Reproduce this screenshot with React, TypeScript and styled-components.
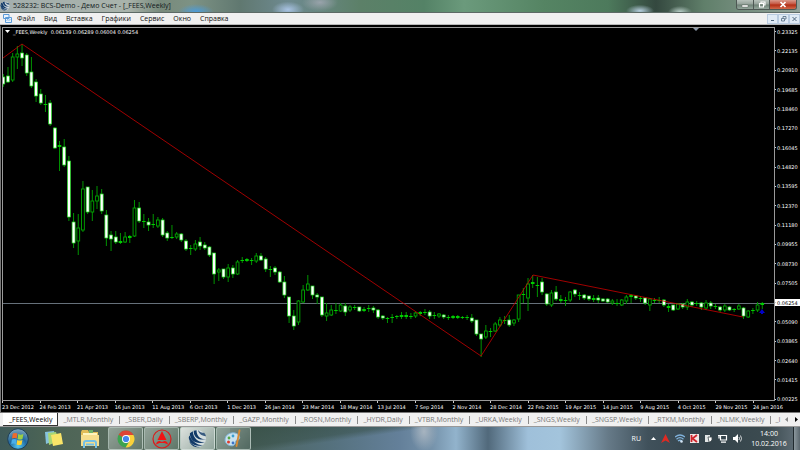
import React from "react";
import styled, { createGlobalStyle } from "styled-components";

const Global = createGlobalStyle`
  * { box-sizing: border-box; }
  html, body { margin: 0; height: 100%; background: #000; }
  body { font-family: "Open Sans", "Noto Sans", sans-serif; }
  #root { height: 100%; }
  button { font: inherit; border: 0; padding: 0; margin: 0; background: none; color: inherit; }
`;

type Kind = "up" | "down" | "doji";
type Candle = [high: number, top: number, bottom: number, low: number, kind: Kind];

const RAW = `74 77 84 86 d|67 76 82 82 d|53 57 80 81 u|46 54 57 68 u|44 53 58 65 d|53 55 73 75 d|57 72 86 87 d|79 82 96 101 d|89 94 103 104 d|95 104 105 111 x
100 103 124 125 d|127 128 148 148 d|141 145 147 170 x|139 147 165 166 d|156 161 217 220 d|213 222 243 247 d|214 228 241 254 u|181 189 230 231 u|187 187 212 213 d|190 201 212 220 u
186 196 201 208 u|189 194 211 213 d|210 215 238 245 d|231 235 239 250 d|231 237 242 243 d|233 241 243 243 x|232 237 242 242 u|235 236 238 242 x|200 208 236 236 u|202 208 221 222 d
214 221 222 227 x|218 222 225 230 d|214 224 225 227 x|217 220 226 227 u|218 220 235 236 d|231 233 238 240 d|225 237 238 238 x|232 234 237 238 u|233 234 240 241 d|239 241 249 250 d
245 248 249 254 x|240 244 249 250 u|237 242 246 249 d|242 245 248 249 d|246 247 255 256 d|253 253 274 283 d|268 270 272 280 u|269 269 277 278 d|264 268 277 281 u|265 268 274 277 d
260 262 274 274 u|257 260 261 262 x|258 259 261 261 x|258 260 261 264 x|253 256 261 262 u|253 256 260 260 d|257 259 269 271 d|266 269 270 276 x|266 268 272 274 d|271 272 282 282 d
276 282 295 297 d|297 297 316 322 d|310 316 326 329 d|300 301 322 324 u|285 290 302 302 u|275 284 290 290 u|286 286 295 298 d|293 295 297 303 d|297 297 315 316 d|303 313 316 320 u
305 310 315 315 u|303 310 311 313 x|303 305 311 311 u|303 306 312 315 d|305 307 310 311 u|305 307 308 309 x|307 307 311 311 d|307 309 311 311 x|305 308 309 311 x|306 308 310 312 d
309 310 317 318 d|315 316 318 319 d|317 318 319 322 x|314 317 318 322 x|315 316 317 318 x|312 315 317 318 x|312 315 317 318 x|313 316 317 318 x|312 313 316 317 u|311 312 314 315 x
309 312 313 314 x|310 312 316 318 d|312 315 316 318 x|313 314 316 317 u|314 315 317 318 d|315 317 318 319 x|315 316 318 318 x|315 316 318 318 x|316 317 318 318 x|315 317 318 319 x
314 318 321 322 d|320 320 334 335 d|334 334 339 356 d|325 331 337 338 u|328 331 332 336 x|322 324 331 331 u|317 320 325 326 u|316 320 321 323 x|315 320 325 326 d|319 320 323 325 u
295 295 319 321 u|288 294 295 302 x|278 284 298 310 u|275 282 284 287 x|277 285 286 296 x|278 282 292 294 d|293 294 304 305 d|290 293 305 306 u|286 292 299 300 d|295 299 301 302 x
297 300 301 305 x|291 292 300 301 u|289 290 294 296 d|292 295 296 299 x|294 295 298 299 d|296 296 299 300 d|295 298 300 301 x|295 298 300 302 d|298 299 301 301 d|298 299 302 302 d
299 301 303 304 u|299 303 304 305 x|299 300 305 305 u|295 297 301 303 u|294 295 297 302 x|295 296 298 299 d|296 298 299 301 x|298 298 303 304 d|298 299 305 310 u|298 300 301 302 x
297 300 301 302 x|299 300 305 306 d|304 306 308 311 x|305 305 310 310 d|303 304 309 309 u|303 304 307 308 d|299 302 307 309 u|301 302 305 306 d|301 303 304 305 x|302 303 307 309 d
300 303 308 309 u|301 303 306 308 d|304 306 307 308 x|306 307 310 311 d|304 306 310 311 u|306 307 310 310 d|308 309 310 311 x|304 306 309 309 u|307 308 316 318 d|310 311 317 317 u
308 310 311 313 x|302 305 310 311 u|302 303 305 308 x`;

const kinds: Record<string, Kind> = { u: "up", d: "down", x: "doji" };

const candles: Candle[] = RAW.split(/[|\n]/).map((row) => {
  const [h, t, b, l, k] = row.split(" ");
  return [+h, +t, +b, +l, kinds[k]];
});

const prices = [
  "0.23325", "0.22135", "0.20910", "0.19685", "0.18460", "0.17270", "0.16045", "0.14820", "0.13595", "0.12370",
  "0.11180", "0.09955", "0.08730", "0.07505", "0.06254", "0.05090", "0.03865", "0.02640", "0.01415", "0.00225",
];
const dates = [
  "23 Dec 2012", "24 Feb 2013", "21 Apr 2013", "16 Jun 2013", "11 Aug 2013", "6 Oct 2013", "1 Dec 2013",
  "26 Jan 2014", "23 Mar 2014", "18 May 2014", "13 Jul 2014", "7 Sep 2014", "2 Nov 2014", "28 Dec 2014",
  "22 Feb 2015", "19 Apr 2015", "14 Jun 2015", "9 Aug 2015", "4 Oct 2015", "29 Nov 2015", "24 Jan 2016",
];
const menus = ["Файл", "Вид", "Вставка", "Графики", "Сервис", "Окно", "Справка"];
const tabs = [
  "_FEES,Weekly", "_MTLR,Monthly", "_SBER,Daily", "_SBERP,Monthly", "_GAZP,Monthly", "_ROSN,Monthly", "_HYDR,Daily",
  "_VTBR,Monthly", "_URKA,Weekly", "_SNGS,Weekly", "_SNGSP,Weekly", "_RTKM,Monthly", "_NLMK,Weekly", "_I",
];

const Window = styled.div`
  display: flex;
  flex-direction: column;
  height: 100vh;
  min-height: 300px;
  overflow: hidden;
  background: #000;
`;

const TitleBar = styled.header`
  display: flex;
  align-items: center;
  flex: none;
  height: 13px;
  gap: 3px;
  padding-right: 3px;
  border-bottom: 1px solid #5d6a66;
  background:
    radial-gradient(ellipse 18px 8px at 24.5% 100%, #4a9cdc, transparent),
    radial-gradient(ellipse 16px 8px at 36% 80%, #a9c3e3, transparent),
    radial-gradient(ellipse 18px 9px at 40% 20%, #99a3ab, transparent),
    radial-gradient(ellipse 14px 6px at 80% 90%, #b6cede, transparent),
    radial-gradient(ellipse 12px 6px at 85% 100%, #b9cfc9, transparent),
    linear-gradient(90deg, #a3aead 0%, #a9b3ab 16%, #788a7c 20%, #7d9284 24%, #607870 30%, #6e8a90 36%, #5c8068 45%, #548266 53%, #6b9a7c 58%, #558463 68%, #4d7a5c 76%, #34483f 82%, #607f6a 88%, #93a39b 100%);
`;

const Title = styled.h1`
  flex: 1;
  margin: 0;
  font-size: 7px;
  line-height: 12px;
  font-weight: 400;
  color: #10181a;
  white-space: nowrap;
`;

const CaptionButtons = styled.div`
  display: flex;
  align-self: flex-start;
  height: 10px;
  border: 1px solid #4e5854;
  border-top: 0;
  border-radius: 0 0 3px 3px;
  overflow: hidden;
`;

const CaptionButton = styled.button<{ $close?: boolean }>`
  display: grid;
  place-items: center;
  width: ${(p) => (p.$close ? 27 : 16)}px;
  background: ${(p) =>
    p.$close ? "linear-gradient(#d99a8c, #c4513c 48%, #b02a12 52%, #d0684a)" : "linear-gradient(#b8c2bc, #93a199 48%, #6d8075 52%, #94a69c)"};
  & + & { border-left: 1px solid #4e5854; }
`;

const MenuBar = styled.nav`
  display: flex;
  align-items: center;
  flex: none;
  height: 12px;
  padding-left: 3px;
  background: #f0f0f0;
  border-bottom: 1px solid #b8b8b8;
`;

const MenuItems = styled.div`
  display: flex;
  flex: 1;
  gap: 9px;
  padding-left: 5px;
`;

const MenuItem = styled.button`
  font-size: 7px;
  line-height: 11px;
  color: #111;
`;

const ChildButton = styled.button`
  display: grid;
  place-items: center;
  width: 11px;
  height: 10px;
  border: 1px solid #b9cbe0;
  background: #e0eaf5;
`;

const Chart = styled.main`
  display: flex;
  flex-direction: column;
  flex: 1;
  min-height: 0;
  border-top: 2px solid #000;
  border-left: 1px solid #777;
  background: #000;
  color: #fff;
  font-family: "DejaVu Sans", sans-serif;
  font-size: 5px;
  line-height: 8px;
`;

const PlotRow = styled.div`
  display: flex;
  flex: 1;
  min-height: 0;
`;

const Plot = styled.section`
  position: relative;
  flex: 1;
  min-width: 0;
  margin-left: 1px;
  border: 1px solid #999;
`;

const Graph = styled.svg`
  display: block;
  width: 100%;
  height: 100%;
`;

const Legend = styled.div`
  position: absolute;
  left: 2px;
  top: 0;
  display: flex;
  align-items: center;
  gap: 3px;
  white-space: pre;
`;

const PriceAxis = styled.div`
  display: flex;
  flex-direction: column;
  justify-content: space-between;
  flex: none;
  width: 25px;
  padding-top: 1px;
  margin-bottom: -2px;
`;

const Price = styled.div<{ $current?: boolean }>`
  display: flex;
  align-items: center;
  height: 7px;
  color: ${(p) => (p.$current ? "#000" : "#fff")};
  background: ${(p) => (p.$current ? "#fff" : "none")};
  &::before {
    content: "";
    width: 1px;
    height: 1px;
    margin-right: 1px;
    background: #ccc;
  }
`;

const DateAxis = styled.div`
  display: flex;
  flex: none;
  height: 11px;
  padding-left: 1px;
`;

const DateLabel = styled.div`
  flex: 1 1 0;
  width: 0;
  white-space: nowrap;
  &::before {
    content: "";
    display: block;
    width: 1px;
    height: 2px;
    background: #ccc;
  }
  &:last-child { flex: 0 0 47px; }
`;

const TabBar = styled.nav`
  display: flex;
  flex: none;
  height: 15px;
  padding-left: 3px;
  border-top: 1px solid #777;
  border-bottom: 1px solid #999;
  background: #f0f0f0;
  font-family: "Open Sans", "Noto Sans", sans-serif;
  font-size: 7px;
  line-height: 12px;
`;

const TabList = styled.div`
  display: flex;
  flex: 1;
  min-width: 0;
  overflow: hidden;
`;

const Tab = styled.button<{ $active?: boolean }>`
  display: flex;
  align-items: center;
  flex: none;
  height: 13px;
  padding: 1px ${(p) => (p.$active ? "5px 0 6px" : "0 0 5px")};
  white-space: nowrap;
  color: ${(p) => (p.$active ? "#000" : "#777")};
  background: ${(p) => (p.$active ? "#fff" : "none")};
  border-right: ${(p) => (p.$active ? "1px solid #333" : "0")};
  border-bottom: ${(p) => (p.$active ? "1px solid #333" : "0")};
  &:not(:first-child):not(:last-child)::after {
    content: "";
    width: 1px;
    height: 8px;
    margin-left: 6px;
    background: #8a8a8a;
  }
  &:last-child { padding-left: 4px; }
`;

const Scroll = styled.button`
  width: 9px;
  display: grid;
  place-items: center;
`;

const TaskBar = styled.footer`
  display: flex;
  flex: none;
  align-items: center;
  height: 23px;
  color: #fff;
  background:
    radial-gradient(ellipse 14px 20px at 53% 20%, #a7b4c0, transparent),
    linear-gradient(172deg, rgba(52, 76, 66, 0.75) 0%, rgba(52, 76, 66, 0.5) 45%, transparent 58%) 230px 0 / 190px 23px no-repeat,
    linear-gradient(90deg, #3f5a58 0%, #4c6455 6%, #56695c 15%, #4f6a5a 25%, #4c645e 31%, #54707c 41%, #64809a 50%, #7592aa 54%, #92b3cc 57%, #51697b 61%, #9fc0da 66%, #a3c4dc 70%, #667a88 76%, #40515b 81%, #34434b 88%, #3c4b50 96%, #63717a 100%);
`;

const TaskButtons = styled.div`
  display: flex;
  flex: 1;
  gap: 1px;
  height: 23px;
`;

const TaskButton = styled.button<{ $state?: "open" | "active" }>`
  display: grid;
  place-items: center;
  width: 35px;
  height: 23px;
  border: 1px solid ${(p) => (p.$state ? "rgba(205, 220, 214, 0.6)" : "transparent")};
  border-radius: 2px;
  background: ${(p) =>
    p.$state === "active"
      ? "linear-gradient(135deg, rgba(255,255,255,0.8), rgba(200,215,210,0.55))"
      : p.$state
      ? "linear-gradient(135deg, rgba(225,235,230,0.45), rgba(150,170,160,0.2))"
      : "none"};
`;

const Tray = styled.div`
  display: flex;
  align-items: center;
  gap: 5px;
`;

const Language = styled.button`
  font-size: 7px;
  margin-right: 5px;
`;

const Clock = styled.time`
  width: 38px;
  margin-left: 3px;
  text-align: center;
  font-size: 7px;
  line-height: 10px;
`;

const ShowDesktop = styled.button`
  width: 7px;
  height: 23px;
  border-left: 1px solid #202a2e;
  background: linear-gradient(90deg, #8b979d, #59666d);
`;

const Swirl = ({ size }: { size: number }) => (
  <svg width={size} height={size} viewBox="0 0 20 20" aria-hidden="true">
    <circle cx="10" cy="10" r="9" fill="#e4ebf0" opacity=".7" />
    <g fill="#123a68">
      <path d="M10.500 1C11 4.500 14 7 19 7.500C18.600 6 17.800 4.800 17 4C14.500 4 12 3 10.500 1z" opacity=".8" />
      <path d="M6 1.800C5.500 7.500 10 12.500 19.200 10.800C12.500 10.800 9 7 9 1.200z" />
      <path d="M2 4.500C1.500 11.500 8.500 17 18 14C10.500 14.500 5.500 9.500 5 2.400z" />
      <path d="M.8 9C1 14.500 7 19.500 15.500 17C9 16.800 4 12.500 1.500 6.500z" />
      <path d="M2 14.500C4.500 18.500 8.500 20 12.500 19C8.500 18.800 5 17 1.500 12.500z" />
    </g>
  </svg>
);

const StartOrb = () => (
  <svg width="22" height="22" viewBox="0 0 22 22" aria-hidden="true">
    <defs>
      <radialGradient id="orb" cx="50%" cy="85%" r="85%">
        <stop offset="0" stopColor="#54c8f2" />
        <stop offset=".5" stopColor="#20689f" />
        <stop offset="1" stopColor="#84a9bd" />
      </radialGradient>
    </defs>
    <circle cx="11" cy="11" r="10.3" fill="url(#orb)" stroke="#1d3f5a" />
    <path d="M5.800 5.600c1.600-.9 3-.9 4.600 0l-.6 5c-1.500-.8-3.200-.8-4.800 0z" fill="#ee6b2b" />
    <path d="M11.200 6c1.600.9 3.200.9 5.200 0l-.9 5c-1.600.8-3.200.8-5 -.1z" fill="#9bcf45" />
    <path d="M4.800 11.600c1.600-.8 3.200-.8 4.800 0l-.8 4.600c-1.500-.8-3-.8-4.500 0z" fill="#4aaeea" />
    <path d="M10.300 12c1.600.8 3.400.8 5.100 0l-.8 4.500c-1.600.8-3.300.8-5 0z" fill="#fdd22f" />
  </svg>
);

const Notes = () => (
  <svg width="20" height="18" viewBox="0 0 20 18" aria-hidden="true">
    <path d="M1 2l9-1 2 9-10 4z" fill="#86c3dd" />
    <path d="M4 3l8-1 3 9-10 4z" fill="#a9d673" />
    <path d="M7 5l10-2 2 11-10 2z" fill="#f9e468" />
  </svg>
);

const Folder = () => (
  <svg width="20" height="20" viewBox="0 0 20 20" aria-hidden="true">
    <path d="M1 3l1-2h6l1 2h9v14H1z" fill="#e2bd57" />
    <path d="M9 1h4v3H9z" fill="#6fb36a" />
    <path d="M3 4h14v9H3z" fill="#fff4bd" />
    <path d="M1 6h18v11H1z" fill="#f7de8c" />
    <path d="M4 19v-5q0-2 2-2h8q2 0 2 2v5M6 15.500h8" fill="none" stroke="#74c0e6" strokeWidth="2" />
  </svg>
);

const Chrome = () => (
  <svg width="18" height="18" viewBox="0 0 18 18" aria-hidden="true">
    <circle cx="9" cy="9" r="8.500" fill="#3da350" />
    <path d="M9 9L1.600 4.800A8.500 8.500 0 0 1 16.500 5z" fill="#dd4435" />
    <path d="M9 5h7.500A8.500 8.500 0 0 1 8.600 17.500L12.500 11z" fill="#fbd03b" />
    <circle cx="9" cy="9" r="4" fill="#fff" />
    <circle cx="9" cy="9" r="3.100" fill="#4386ee" />
  </svg>
);

const RedEmblem = () => (
  <svg width="20" height="20" viewBox="0 0 20 20" aria-hidden="true">
    <circle cx="10" cy="10" r="9" fill="none" stroke="#d81c1c" strokeWidth="1.200" />
    <path d="M10 2l4.500 9h-9zM4 15.500q.5-3.500 3.500-3.500l2.500 1 2.500-1q3 0 3.500 3.500l-3.500-1.500h-5z" fill="#f01414" />
  </svg>
);

const Palette = () => (
  <svg width="19" height="19" viewBox="0 0 19 19" aria-hidden="true">
    <path d="M1 11c0-5 5-8 10-7 5 1 6 6 3 7-3 0-2 2-3 4-2 4-10 1-10-4z" fill="#c9e1ee" stroke="#7fb4d6" />
    <circle cx="5" cy="9" r="1.400" fill="#56a844" />
    <circle cx="9" cy="7" r="1.400" fill="#3b9ed0" />
    <circle cx="4.500" cy="13" r="1.500" fill="#e13b2b" />
    <circle cx="9" cy="14" r="1.400" fill="#3b73c8" />
    <path d="M15.500 1.500L12.500 17" stroke="#d98a33" strokeWidth="1.800" strokeLinecap="round" />
  </svg>
);

const TrayIcons = () => (
  <>
    <svg width="5" height="4" viewBox="0 0 5 4"><path d="M0 3l2.500-3L5 3z" fill="#fff" /></svg>
    <svg width="9" height="9" viewBox="0 0 9 9"><path d="M4.500 0L9 9 4.500 6.500 0 9z" fill="#e02a22" /></svg>
    <svg width="10" height="9" viewBox="0 0 10 9">
      <path d="M0 3q5-4 10 0M1.500 5.200q3.500-3 7 0M3 7q2-1.500 4 0" fill="none" stroke="#80b2dc" strokeWidth="1.300" />
      <circle cx="6.500" cy="7.500" r="1.300" fill="#d5e6f5" />
    </svg>
    <svg width="9" height="9" viewBox="0 0 9 9">
      <path d="M0 0h9v9H0z" fill="#f1e5e4" /><path d="M1.500 1v7M7 1L2.500 4.500 7 8" fill="none" stroke="#d0232b" strokeWidth="1.800" />
    </svg>
    <svg width="9" height="9" viewBox="0 0 9 9">
      <path d="M1 1h5v7H1z" fill="#e2e5e6" /><path d="M4 3h4v3l-2 2H5z" fill="#fff" stroke="#404a4e" strokeWidth=".8" />
    </svg>
    <svg width="10" height="9" viewBox="0 0 10 9">
      <path d="M2.500 1.500h6v4.500h-6zM3 8.200h5M0 1.500h2M1 1.500v3" fill="none" stroke="#fff" strokeWidth="1.200" />
    </svg>
    <svg width="9" height="9" viewBox="0 0 9 9">
      <path d="M0 3h2l3-3v9L2 6H0z" fill="#fff" /><path d="M6 3q1 1.500 0 3M7.500 1.500q2 3 0 6" fill="none" stroke="#fff" strokeWidth=".8" />
    </svg>
  </>
);

const CandleShape = ({ data, index }: { data: Candle; index: number }) => {
  const [high, top, bottom, low, kind] = data;
  const x = 3.3 + index * 4.685;
  const height = Math.max(bottom - top, 1);
  return (
    <g>
      <line x1={x} x2={x} y1={high} y2={low + 1} stroke="#009400" />
      {kind === "down" && <rect x={x - 1.5} y={top} width="3" height={height} fill="#fff" stroke="#20dc20" strokeWidth=".7" />}
      {kind === "up" && <rect x={x - 1.4} y={top} width="2.8" height={height} fill="#000" stroke="#00a800" strokeWidth=".9" />}
      {kind === "doji" && <rect x={x - 1.8} y={top} width="3.6" height={height} fill="#00cc00" />}
    </g>
  );
};

export default function App() {
  return (
    <Window>
      <Global />
      <TitleBar>
        <Swirl size={10} />
        <Title>528232: BCS-Demo - Демо Счет - [_FEES,Weekly]</Title>
        <CaptionButtons>
          <CaptionButton aria-label="Свернуть">
            <svg width="8" height="7" viewBox="0 0 8 7"><path d="M1 4h6v2H1z" fill="#fff" stroke="#4b5552" strokeWidth=".4" /></svg>
          </CaptionButton>
          <CaptionButton aria-label="Восстановить">
            <svg width="8" height="7" viewBox="0 0 8 7"><path d="M3 2V1h4v3H6M1.500 2.500h4v3.500h-4z" fill="none" stroke="#fff" strokeWidth="1.100" /></svg>
          </CaptionButton>
          <CaptionButton $close aria-label="Закрыть">
            <svg width="8" height="7" viewBox="0 0 8 7"><path d="M1.500 1l5 5M6.500 1l-5 5" stroke="#fff" strokeWidth="1.700" /></svg>
          </CaptionButton>
        </CaptionButtons>
      </TitleBar>
      <MenuBar>
        <svg width="9" height="9" viewBox="0 0 9 9" aria-hidden="true">
          <path d="M.5.5h5.500v4h-5.500zM2.500 3.500h6v5h-6z" fill="#eaf4fd" stroke="#5a9bd8" />
          <path d="M3.500 6.500l1.500-1 1 1 1.500-1.500" fill="none" stroke="#5a9bd8" strokeWidth=".8" />
        </svg>
        <MenuItems>
          {menus.map((m) => <MenuItem key={m}>{m}</MenuItem>)}
        </MenuItems>
        <ChildButton aria-label="Свернуть график"><svg width="7" height="6" viewBox="0 0 7 6"><path d="M2 4.500h3" stroke="#51687f" /></svg></ChildButton>
        <ChildButton aria-label="Восстановить график"><svg width="7" height="6" viewBox="0 0 7 6"><path d="M3 2V.5h3v2.500H5M1.500 2.500h3v2.500h-3z" fill="none" stroke="#51687f" strokeWidth=".8" /></svg></ChildButton>
        <ChildButton aria-label="Закрыть график"><svg width="7" height="6" viewBox="0 0 7 6"><path d="M1.500 1l4 4M5.500 1l-4 4" stroke="#51687f" /></svg></ChildButton>
      </MenuBar>
      <Chart>
        <PlotRow>
          <Plot>
            <Graph viewBox="3 28 771 372" preserveAspectRatio="none" role="img" aria-label="_FEES,Weekly">
              <line x1="3" x2="774" y1="303.500" y2="303.500" stroke="#66707a" />
              {candles.map((c, i) => <CandleShape key={i} data={c} index={i} />)}
              <polyline points="3,58 22,44 481,356 533,275 743,317" fill="none" stroke="#c80000" strokeWidth=".8" />
              <path d="M762 309l-3 4h2v1h2v-1h2z" fill="#0000c8" />
              <path d="M693 28h6l-3 3z" fill="#8b98a8" />
            </Graph>
            <Legend>
              <svg width="5" height="4" viewBox="0 0 5 4"><path d="M0 0h5L2.500 3z" fill="#fff" /></svg>
              <span>_FEES,Weekly  0.06139 0.06289 0.06004 0.06254</span>
            </Legend>
          </Plot>
          <PriceAxis>
            {prices.map((p) => <Price key={p} $current={p === "0.06254"}>{p}</Price>)}
          </PriceAxis>
        </PlotRow>
        <DateAxis>
          {dates.map((d) => <DateLabel key={d}>{d}</DateLabel>)}
        </DateAxis>
      </Chart>
      <TabBar>
        <TabList>
          {tabs.map((t, i) => <Tab key={t} $active={i === 0}>{t}</Tab>)}
        </TabList>
        <Scroll aria-label="Назад"><svg width="4" height="5" viewBox="0 0 4 5"><path d="M3 0v5L0 2.500z" fill="#888" /></svg></Scroll>
        <Scroll aria-label="Вперёд"><svg width="4" height="5" viewBox="0 0 4 5"><path d="M1 0v5l3-2.500z" fill="#000" /></svg></Scroll>
      </TabBar>
      <TaskBar>
        <TaskButtons>
          <TaskButton aria-label="Пуск"><StartOrb /></TaskButton>
          <TaskButton aria-label="Записки"><Notes /></TaskButton>
          <TaskButton aria-label="Проводник"><Folder /></TaskButton>
          <TaskButton $state="open" aria-label="Chrome"><Chrome /></TaskButton>
          <TaskButton $state="open" aria-label="Терминал"><RedEmblem /></TaskButton>
          <TaskButton $state="active" aria-label="BCS-Demo"><Swirl size={19} /></TaskButton>
          <TaskButton $state="open" aria-label="Paint"><Palette /></TaskButton>
        </TaskButtons>
        <Tray>
          <Language>RU</Language>
          <TrayIcons />
          <Clock>14:00<br />10.02.2016</Clock>
          <ShowDesktop aria-label="Показать рабочий стол" />
        </Tray>
      </TaskBar>
    </Window>
  );
}
